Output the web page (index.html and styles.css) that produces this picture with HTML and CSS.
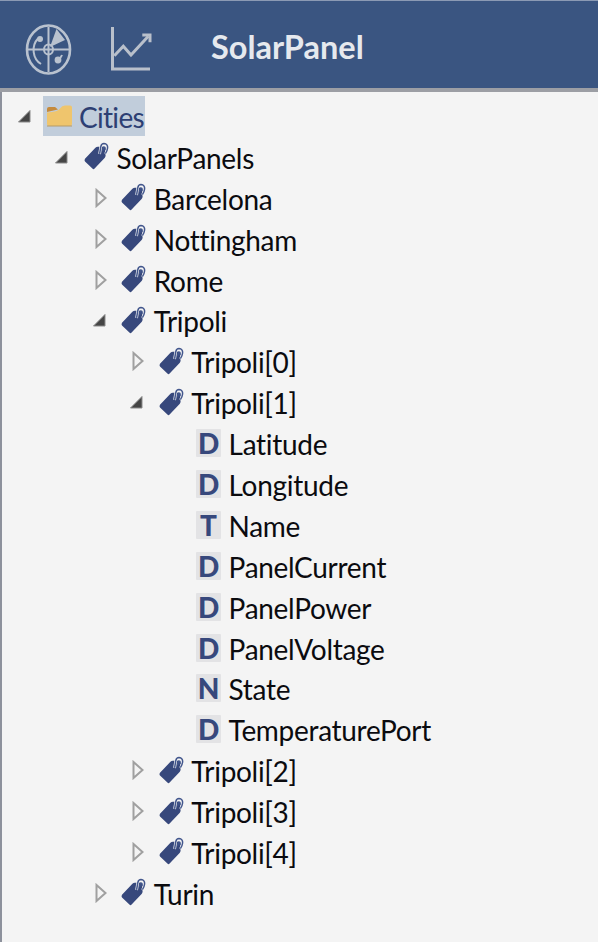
FILE: index.html
```html
<!DOCTYPE html>
<html lang="en">
<head>
<meta charset="utf-8">
<title>SolarPanel</title>
<link rel="stylesheet" href="styles.css">
</head>
<body>
<svg class="defs" width="0" height="0" aria-hidden="true">
  <symbol id="tag" viewBox="0 0 25 28">
    <path d="M1 16.8 11.4 5.8Q12.4 4.8 13.8 4.8L19.6 4.6Q21 4.6 21 6L21.6 13.6Q21.6 15 20.6 16L10.6 26.6Q9.5 27.7 8.4 26.6L1 19.6Q0 18.2 1 16.8Z" fill="#37487c"/>
    <path d="M15.6 12 16.8 4.4Q17.4 1.4 20 1.6Q24.2 2 23.8 6Q23.4 9.2 21.4 12" fill="none" stroke="#f4f4f4" stroke-width="2.8"/>
    <path d="M15.6 11.8 16.8 4.6Q17.4 1.6 20 1.6Q24 2 23.6 6Q23.2 9.2 21.4 11.6M18.6 9 19.2 6Q19.8 4.8 20.8 5.4Q21.4 6 21 8" fill="none" stroke="#42568c" stroke-width="1.5"/>
  </symbol>
  <symbol id="open" viewBox="0 0 14 14">
    <path d="M13 1.5V13H1.5Z" fill="#454545" stroke="#8a8a8a"/>
  </symbol>
  <symbol id="closed" viewBox="0 0 12 20">
    <path d="M1.5 2 10.5 10 1.5 18Z" fill="#f4f4f4" stroke="#a0a0a0" stroke-width="2"/>
  </symbol>
</svg>

<header class="bar">
  <svg class="radar" viewBox="0 0 48 52" aria-hidden="true">
    <g fill="none" stroke="#b9c2cf">
      <ellipse cx="23.5" cy="25.5" rx="21.5" ry="24" stroke-width="2.6"/>
      <path d="M16 40A14.5 16 0 0 1 13 14.5M31 38.5A14.5 16 0 0 0 37 31" stroke-width="2"/>
      <ellipse cx="23.5" cy="25.5" rx="4.5" ry="5" stroke-width="2"/>
      <path d="M23.5 3V48M2 25.5H45" stroke-width="2"/>
    </g>
    <path d="M25 23 31.5 5 40 16Z" fill="#b9c2cf"/>
    <circle cx="15" cy="15" r="3" fill="#b9c2cf"/>
    <circle cx="33" cy="36" r="3.4" fill="#b9c2cf"/>
  </svg>
  <svg class="chart" viewBox="0 0 42 46" aria-hidden="true">
    <path d="M2.5 2V44H40" fill="none" stroke="#b9c0cb" stroke-width="3"/>
    <path d="M4.3 30.7 13.3 21.3 21 30 38.3 11.3" fill="none" stroke="#b9c0cb" stroke-width="3"/>
    <path d="M32.3 10H40V17.3" fill="none" stroke="#b9c0cb" stroke-width="3"/>
  </svg>
  <h1 class="title">SolarPanel</h1>
</header>

<main class="panel">
  <ul class="tree root">
    <li>
      <div class="row">
        <span class="twist"><svg class="open"><use href="#open"/></svg></span>
        <span class="selected">
          <svg class="folder" viewBox="0 0 25 24" aria-hidden="true">
            <path d="M0 5Q0 3 2 3H8L11 5.5 0 8Z" fill="#c58a3c"/>
            <path d="M0 8.5Q11 8 13 4.5 15 1.5 18 1.5H23Q25 1.5 25 3.5V20Q25 22 23 22H2Q0 22 0 20Z" fill="#efc56d"/>
            <path d="M0 21.5H25V22.5H0Z" fill="#b59a68"/>
          </svg>
          <span class="label city">Cities</span>
        </span>
      </div>
      <ul class="tree">
        <li>
          <div class="row"><span class="twist"><svg class="open"><use href="#open"/></svg></span><svg class="tag"><use href="#tag"/></svg><span class="label">SolarPanels</span></div>
          <ul class="tree">
            <li><div class="row"><span class="twist"><svg class="closed"><use href="#closed"/></svg></span><svg class="tag"><use href="#tag"/></svg><span class="label">Barcelona</span></div></li>
            <li><div class="row"><span class="twist"><svg class="closed"><use href="#closed"/></svg></span><svg class="tag"><use href="#tag"/></svg><span class="label">Nottingham</span></div></li>
            <li><div class="row"><span class="twist"><svg class="closed"><use href="#closed"/></svg></span><svg class="tag"><use href="#tag"/></svg><span class="label">Rome</span></div></li>
            <li>
              <div class="row"><span class="twist"><svg class="open"><use href="#open"/></svg></span><svg class="tag"><use href="#tag"/></svg><span class="label">Tripoli</span></div>
              <ul class="tree">
                <li><div class="row"><span class="twist"><svg class="closed"><use href="#closed"/></svg></span><svg class="tag"><use href="#tag"/></svg><span class="label">Tripoli[0]</span></div></li>
                <li>
                  <div class="row"><span class="twist"><svg class="open"><use href="#open"/></svg></span><svg class="tag"><use href="#tag"/></svg><span class="label">Tripoli[1]</span></div>
                  <ul class="tree">
                    <li><div class="row"><span class="twist"></span><span class="badge">D</span><span class="label">Latitude</span></div></li>
                    <li><div class="row"><span class="twist"></span><span class="badge">D</span><span class="label">Longitude</span></div></li>
                    <li><div class="row"><span class="twist"></span><span class="badge">T</span><span class="label">Name</span></div></li>
                    <li><div class="row"><span class="twist"></span><span class="badge">D</span><span class="label">PanelCurrent</span></div></li>
                    <li><div class="row"><span class="twist"></span><span class="badge">D</span><span class="label">PanelPower</span></div></li>
                    <li><div class="row"><span class="twist"></span><span class="badge">D</span><span class="label">PanelVoltage</span></div></li>
                    <li><div class="row"><span class="twist"></span><span class="badge">N</span><span class="label">State</span></div></li>
                    <li><div class="row"><span class="twist"></span><span class="badge">D</span><span class="label">TemperaturePort</span></div></li>
                  </ul>
                </li>
                <li><div class="row"><span class="twist"><svg class="closed"><use href="#closed"/></svg></span><svg class="tag"><use href="#tag"/></svg><span class="label">Tripoli[2]</span></div></li>
                <li><div class="row"><span class="twist"><svg class="closed"><use href="#closed"/></svg></span><svg class="tag"><use href="#tag"/></svg><span class="label">Tripoli[3]</span></div></li>
                <li><div class="row"><span class="twist"><svg class="closed"><use href="#closed"/></svg></span><svg class="tag"><use href="#tag"/></svg><span class="label">Tripoli[4]</span></div></li>
              </ul>
            </li>
            <li><div class="row"><span class="twist"><svg class="closed"><use href="#closed"/></svg></span><svg class="tag"><use href="#tag"/></svg><span class="label">Turin</span></div></li>
          </ul>
        </li>
      </ul>
    </li>
  </ul>
</main>
</body>
</html>
```
FILE: styles.css
```css
* { box-sizing: border-box; }
html, body { margin: 0; height: 100%; }
body {
  display: flex;
  flex-direction: column;
  width: 598px;
  height: 942px;
  overflow: hidden;
  background: #f4f4f4;
  font-family: Lato, "Noto Sans", sans-serif;
}
.defs { position: absolute; }
.bar {
  display: flex;
  align-items: center;
  height: 92px;
  padding: 1px 0 0 25px;
  flex: none;
  background: #3a5581;
  border-top: 1px solid #8b9ab4;
  border-bottom: 4px solid #9c9ea4;
}
.radar { width: 48px; height: 52px; flex: none; margin-top: 10px; }
.chart { width: 42px; height: 46px; flex: none; margin: 6px 0 0 37px; }
.title {
  margin: 2px 0 0 59px;
  font-size: 32.5px;
  font-weight: 700;
  color: #e6e9ee;
}
.panel {
  flex: 1;
  padding-top: 4.5px;
  border-left: 2px solid #8d919c;
}
.tree { list-style: none; margin: 0; padding: 0 0 0 37.4px; }
.tree.root { padding-left: 15px; }
.row { display: flex; align-items: center; height: 40.9px; }
.twist { display: flex; align-items: center; width: 26px; flex: none; }
.open { width: 14px; height: 14px; margin-top: -2px; }
.closed { width: 12px; height: 20px; margin: -2px 0 0 3px; }
.tag { width: 25px; height: 28px; margin: -3px 7.5px 0 3.5px; flex: none; }
.selected {
  display: flex;
  align-items: center;
  height: 40px;
  margin-top: -2px;
  background: #c1cddb;
  padding: 2px 1px 0 3.5px;
}
.folder { width: 25px; height: 24px; margin: -1px 7.5px 0 0; flex: none; }
.label {
  font-size: 28px;
  line-height: 40px;
  letter-spacing: -0.3px;
  color: #0b0b0f;
  white-space: nowrap;
}
.label.city { letter-spacing: -0.7px; color: #2d3f73; }
.badge {
  display: flex;
  align-items: center;
  justify-content: center;
  width: 25px;
  height: 28px;
  margin: -2px 7.5px 0 3.5px;
  flex: none;
  border-radius: 1px;
  background: #e3e3e5;
  color: #37487c;
  font-size: 28px;
  font-weight: 900;
  line-height: 28px;
}
```
